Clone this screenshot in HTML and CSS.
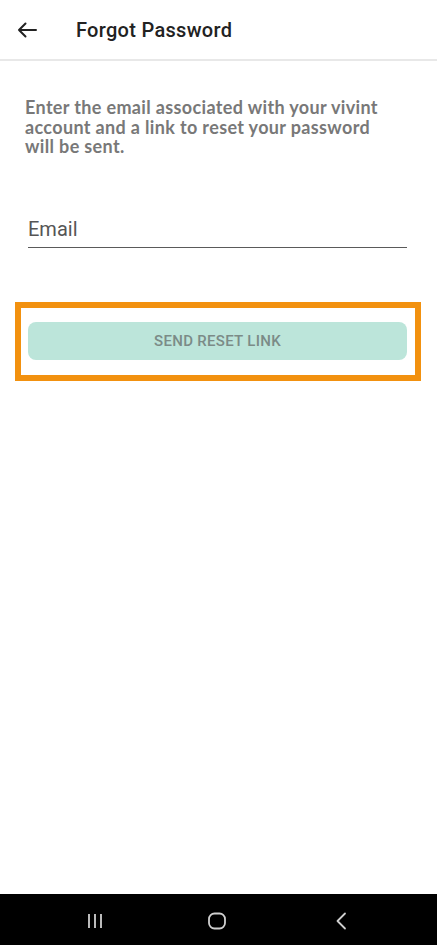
FILE: index.html
```html
<!DOCTYPE html>
<html>
<head>
<meta charset="utf-8">
<link rel="stylesheet" href="styles.css">
</head>
<body>
<div class="screen">
  <header class="header">
    <svg class="back" width="20" height="16" viewBox="0 0 20 16">
      <path d="M19 8H2M8.5 1.5L2 8l6.5 6.5" fill="none" stroke="#222" stroke-width="2" stroke-linecap="round" stroke-linejoin="round"/>
    </svg>
    <h1 class="title">Forgot Password</h1>
  </header>
  <main class="content">
    <p class="intro">Enter the email associated with your vivint account and a link to reset your password will be sent.</p>
    <div class="field"><span class="label">Email</span></div>
    <div class="highlight">
      <button class="send">SEND RESET LINK</button>
    </div>
  </main>
  <nav class="navbar">
    <svg class="nav-icon" width="16" height="16" viewBox="0 0 16 16">
      <path d="M2 1v14M8 1v14M14 1v14" stroke="#cfcfcf" stroke-width="1.8"/>
    </svg>
    <svg class="nav-icon" width="18" height="18" viewBox="0 0 18 18">
      <rect x="1" y="1.5" width="16" height="15" rx="5.5" fill="none" stroke="#cfcfcf" stroke-width="1.8"/>
    </svg>
    <svg class="nav-icon" width="12" height="18" viewBox="0 0 12 18">
      <path d="M10 1.5L2.5 9l7.5 7.5" fill="none" stroke="#cfcfcf" stroke-width="1.8" stroke-linecap="round" stroke-linejoin="round"/>
    </svg>
  </nav>
</div>
</body>
</html>
```
FILE: styles.css
```css
html, body {
  margin: 0;
  padding: 0;
  background: #fff;
}
.screen {
  width: 437px;
  height: 945px;
  display: flex;
  flex-direction: column;
  font-family: Roboto, "Liberation Sans", sans-serif;
}
.header {
  height: 59px;
  border-bottom: 2px solid #e8e8e8;
  display: flex;
  align-items: center;
  padding-left: 17px;
  flex-shrink: 0;
}
.back {
  display: block;
  margin-top: 1px;
}
.title {
  margin: 0 0 0 39px;
  font-size: 20px;
  font-weight: 500;
  color: #222;
  letter-spacing: 0.3px;
}
.content {
  flex: 1;
}
.intro {
  margin: 37px 35px 0 25px;
  font-family: Lato, "Liberation Sans", sans-serif;
  font-size: 18px;
  font-weight: 700;
  line-height: 19.5px;
  color: #787878;
  letter-spacing: 0.35px;
}
.field {
  margin: 61px 30px 0 28px;
  border-bottom: 1px solid #5a5a5a;
  padding-bottom: 5px;
  line-height: 22px;
}
.label {
  font-size: 20px;
  color: #555;
}
.highlight {
  margin: 54px 16px 0 15px;
  border: 6px solid #f2910f;
  padding: 14px 8px 15px 7px;
}
.send {
  display: block;
  width: 100%;
  height: 38px;
  border: none;
  border-radius: 8px;
  background: #bce5da;
  color: #7b8b87;
  font-family: Roboto, "Liberation Sans", sans-serif;
  font-size: 15px;
  font-weight: 500;
  letter-spacing: 0.3px;
  padding: 0;
}
.navbar {
  height: 51px;
  background: #000;
  flex-shrink: 0;
  display: flex;
  align-items: center;
  padding-top: 2px;
  box-sizing: border-box;
}
.nav-icon {
  display: block;
}
.nav-icon:nth-child(1) {
  margin-left: 87px;
}
.nav-icon:nth-child(2) {
  margin-left: 105px;
}
.nav-icon:nth-child(3) {
  margin-left: 109px;
}
```
